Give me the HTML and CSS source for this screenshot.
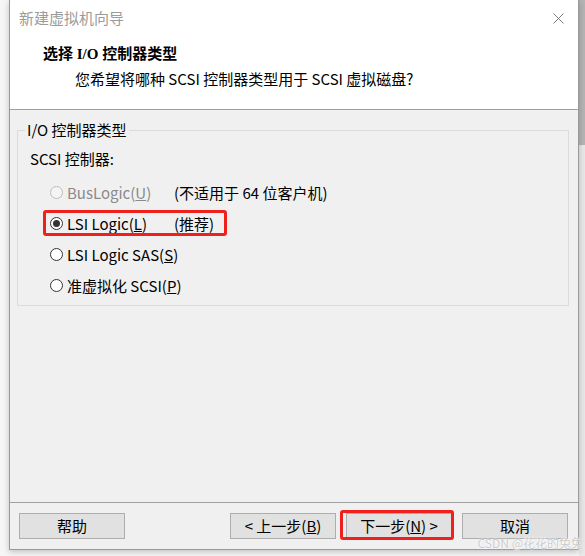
FILE: index.html
```html
<!DOCTYPE html>
<html lang="zh-CN">
<head>
  <meta charset="UTF-8">
  <meta name="viewport" content="width=device-width, initial-scale=1.0">
  <title>新建虚拟机向导</title>
  <link rel="stylesheet" href="styles.css">
</head>
<body>
  <div class="window">
    <div class="header">
      <div class="titlebar">
        <span class="title">新建虚拟机向导</span>
        <svg class="close" width="11" height="11" viewBox="0 0 11 11">
          <path d="M0.5 0.5 L10.5 10.5 M10.5 0.5 L0.5 10.5" stroke="#7a7a7a" stroke-width="1" fill="none"/>
        </svg>
      </div>
      <div class="heading">选择 I/O 控制器类型</div>
      <div class="subheading">您希望将哪种 SCSI 控制器类型用于 SCSI 虚拟磁盘?</div>
    </div>

    <div class="content">
      <fieldset class="group">
        <legend>I/O 控制器类型</legend>
        <div class="group-caption">SCSI 控制器:</div>
        <div class="options">
          <div class="option disabled">
            <span class="choice"><span class="radio"></span>BusLogic(<u>U</u>)</span>
            <span class="note">(不适用于 64 位客户机)</span>
          </div>
          <div class="option">
            <span class="choice"><span class="radio checked"></span>LSI Logic(<u>L</u>)</span>
            <span class="note">(推荐)</span>
          </div>
          <div class="option">
            <span class="choice"><span class="radio"></span>LSI Logic SAS(<u>S</u>)</span>
          </div>
          <div class="option">
            <span class="choice"><span class="radio"></span>准虚拟化 SCSI(<u>P</u>)</span>
          </div>
        </div>
      </fieldset>
    </div>

    <div class="footer">
      <button class="btn">帮助</button>
      <div class="spacer"></div>
      <button class="btn">&lt; 上一步(<u>B</u>)</button>
      <button class="btn">下一步(<u>N</u>) &gt;</button>
      <button class="btn">取消</button>
    </div>

    <!-- red annotation boxes -->
    <div class="mark mark-option"></div>
    <div class="mark mark-next"></div>
  </div>
  <div class="strip">
    <div class="strip-top"></div>
  </div>
  <div class="watermark">CSDN @花花的兔兔</div>
</body>
</html>
```

FILE: styles.css
```css
body {
  margin: 0;
  padding: 0;
  background-color: #f6f6f6;
  font-family: "Noto Sans CJK SC", sans-serif;
  font-size: 15px;
  color: #000;
  display: flex;
  width: 585px;
  height: 556px;
  overflow: hidden;
  position: relative;
}
.window {
  position: relative;
  margin-left: 9px;
  width: 570px;
  height: 550px;
  box-sizing: border-box;
  border: 1px solid #9a9a9a;
  border-top: none;
  background: #f0f0f0;
  display: flex;
  flex-direction: column;
  box-shadow: 0 2px 6px rgba(0, 0, 0, 0.22);
}
.header {
  height: 109px;
  background: #fff;
  border-bottom: 1px solid #a0a0a0;
}
.titlebar {
  height: 36px;
  display: flex;
  align-items: center;
  justify-content: space-between;
  padding: 0 14px 0 9px;
}
.title {
  color: #9b9b9b;
  line-height: 20px;
}
.heading {
  margin-top: 8px;
  padding-left: 33px;
  line-height: 20px;
  font-family: "Liberation Serif", "Noto Sans CJK SC", serif;
  font-weight: bold;
  font-size: 15px;
}
.subheading {
  margin-top: 5px;
  padding-left: 65px;
  line-height: 20px;
}
.content {
  flex: 1;
  padding-top: 10px;
}
.group {
  margin: 0 9px 0 7px;
  padding: 0 0 4px 7px;
  border: 1px solid #dcdcdc;
}
.group legend {
  padding: 0 2px;
  line-height: 20px;
}
.group-caption {
  margin: 9px 0 0 5px;
  line-height: 20px;
}
.options {
  margin-top: 8px;
  padding-left: 25px;
}
.option {
  display: flex;
  align-items: center;
  height: 31px;
  line-height: 20px;
  white-space: nowrap;
}
.choice {
  display: flex;
  align-items: center;
  min-width: 124px;
}
.radio {
  width: 13px;
  height: 13px;
  box-sizing: border-box;
  border: 1px solid #333;
  border-radius: 50%;
  background: #fff;
  margin-right: 4px;
  display: flex;
  align-items: center;
  justify-content: center;
}
.radio.checked::after {
  content: "";
  width: 7px;
  height: 7px;
  border-radius: 50%;
  background: #333;
}
.option.disabled .choice {
  color: #8a8a8a;
}
.option.disabled .radio {
  border-color: #bcbcbc;
  background: #f4f4f4;
}
.footer {
  height: 36px;
  border-top: 1px solid #a0a0a0;
  display: flex;
  gap: 10px;
  padding: 10px 10px 0 9px;
}
.spacer {
  flex: 1;
}
.btn {
  width: 106px;
  height: 26px;
  background: #e1e1e1;
  border: 1px solid #adadad;
  font-family: inherit;
  font-size: 15px;
  color: #000;
  padding: 0;
  line-height: 20px;
}
.mark {
  position: absolute;
  box-sizing: border-box;
  border: 3px solid #f0201c;
  border-radius: 3px;
}
.mark-option {
  left: 33px;
  top: 210px;
  width: 184px;
  height: 26px;
}
.mark-next {
  left: 330px;
  top: 510px;
  width: 114px;
  height: 30px;
}
.strip {
  flex: 1;
  background: #e8e8e8;
}
.strip-top {
  height: 145px;
  background: #b4b4b4;
}
.watermark {
  position: absolute;
  right: 2px;
  bottom: 5px;
  font-size: 12px;
  color: rgba(190, 190, 190, 0.8);
  text-shadow: 0 0 2px #fff, 0 0 1px #fff;
}
```
